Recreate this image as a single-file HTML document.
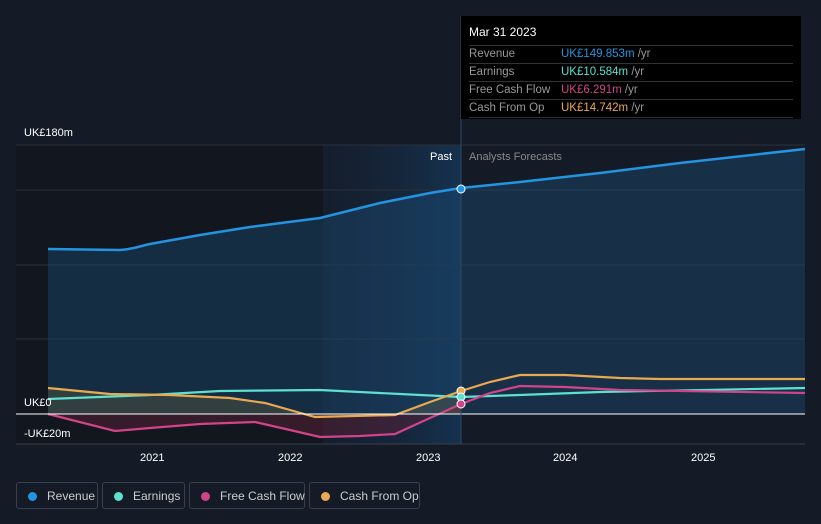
<!DOCTYPE html><html><head><style>
html,body{margin:0;width:821px;height:524px;overflow:hidden}
body{background:#151b26;font-family:"Liberation Sans",sans-serif;position:relative}
.tt{position:absolute;left:461px;top:16px;width:340px;height:103px;background:#000;color:#fff;font-size:11.5px}
.tt .h{padding:9px 8px 6px;font-size:12px}
.r{margin:0 8px;border-top:1px solid #333;height:17px;line-height:17px;color:#999;display:flex}
.r span:first-child{width:92px}
.lg{position:absolute;top:482px;height:27px;border:1px solid #3a404c;border-radius:3px;color:#ccc;font-size:12px;line-height:27px;box-sizing:border-box;white-space:nowrap}
.lg i{display:inline-block;width:9px;height:9px;border-radius:50%;margin:0 10px 0 11px;vertical-align:-1px}
</style></head><body>
<svg width="821" height="524" style="position:absolute;left:0;top:0">
<defs><linearGradient id="g" x1="0" x2="1"><stop offset="0" stop-color="#16243a" stop-opacity=".3"/><stop offset="1" stop-color="#15324f"/></linearGradient></defs>
<rect x="16" y="145" width="307" height="299" fill="#12161e"/>
<rect x="323" y="145" width="138" height="299" fill="url(#g)"/>
<g stroke="#2a303b" stroke-width="1"><line x1="16" x2="805" y1="145" y2="145"/><line x1="16" x2="805" y1="190" y2="190"/><line x1="16" x2="805" y1="265" y2="265"/><line x1="16" x2="805" y1="339" y2="339"/><line x1="16" x2="805" y1="444" y2="444" stroke="#3a404a"/></g>
<path d="M48,249 L120,250 C135,249 140,246 150,244 L200,235 L250,227 L320,218 L380,203 L430,193 L461,188 L520,182 L600,173 L680,163 L805,149 L805,414 L48,414Z" fill="#1b4a70" opacity=".45"/>
<path d="M48,249 L120,250 C135,249 140,246 150,244 L200,235 L250,227 L320,218 L380,203 L430,193 L461,188 L520,182 L600,173 L680,163 L805,149" fill="none" stroke="#2394e0" stroke-width="2.5"/>
<path d="M48,414 L115,431 L150,428 L200,424 L255,422 L290,430 L320,437 L360,436 L395,434 L430,418 L461,404 L461,414Z" fill="#5a1f35" opacity=".5"/>
<path d="M48,388 L110,394 L170,395 L230,398 L265,403 L290,410 L315,417 L395,415 L430,402 L461,391 L461,414 L48,414Z" fill="#6a6040" opacity=".35"/>
<path d="M48,399 L150,395 L220,391 L320,390 L400,394 L461,397 L520,395 L600,392 L805,388" fill="none" stroke="#5ee0cf" stroke-width="2.2"/>
<path d="M48,414 L115,431 L150,428 L200,424 L255,422 L290,430 L320,437 L360,436 L395,434 L430,418 L461,404 L490,393 L520,386 L565,387 L620,390 L805,393" fill="none" stroke="#d0458a" stroke-width="2.2"/>
<path d="M48,388 L110,394 L170,395 L230,398 L265,403 L290,410 L315,417 L395,415 L430,402 L461,391 L490,382 L520,375 L565,375 L620,378 L660,379 L805,379" fill="none" stroke="#e9a951" stroke-width="2.2"/>
<line x1="16" x2="805" y1="414" y2="414" stroke="#fff" stroke-width="1"/>
<line x1="461" x2="461" y1="16" y2="444" stroke="#2a4a66"/>
<circle cx="461" cy="189" r="4" fill="#2394e0" stroke="#fff" stroke-width="1"/>
<circle cx="461" cy="391" r="4" fill="#e9a951" stroke="#fff"/>
<circle cx="461" cy="397" r="4" fill="#5ee0cf" stroke="#fff"/>
<circle cx="461" cy="404" r="4" fill="#d0458a" stroke="#fff"/>
<g font-size="11" fill="#fff"><text x="24" y="136">UK£180m</text><text x="24" y="406">UK£0</text><text x="24" y="437">-UK£20m</text>
<text x="140" y="461">2021</text><text x="278" y="461">2022</text><text x="416" y="461">2023</text><text x="553" y="461">2024</text><text x="691" y="461">2025</text>
<text x="430" y="160">Past</text><text x="469" y="160" fill="#888">Analysts Forecasts</text></g>
</svg>
<div class="tt"><div class="h">Mar 31 2023</div>
<div class="r"><span>Revenue</span><span><b style="font-weight:normal;color:#2394e0">UK£149.853m</b> /yr</span></div>
<div class="r"><span>Earnings</span><span><b style="font-weight:normal;color:#5ee0cf">UK£10.584m</b> /yr</span></div>
<div class="r"><span>Free Cash Flow</span><span><b style="font-weight:normal;color:#d0458a">UK£6.291m</b> /yr</span></div>
<div class="r" style="border-bottom:1px solid #333"><span>Cash From Op</span><span><b style="font-weight:normal;color:#e9a951">UK£14.742m</b> /yr</span></div>
</div>
<div class="lg" style="left:16px;width:82px"><i style="background:#2394e0"></i>Revenue</div>
<div class="lg" style="left:102px;width:83px"><i style="background:#5ee0cf"></i>Earnings</div>
<div class="lg" style="left:189px;width:116px"><i style="background:#d0458a"></i>Free Cash Flow</div>
<div class="lg" style="left:309px;width:111px"><i style="background:#e9a951"></i>Cash From Op</div>
</body></html>
